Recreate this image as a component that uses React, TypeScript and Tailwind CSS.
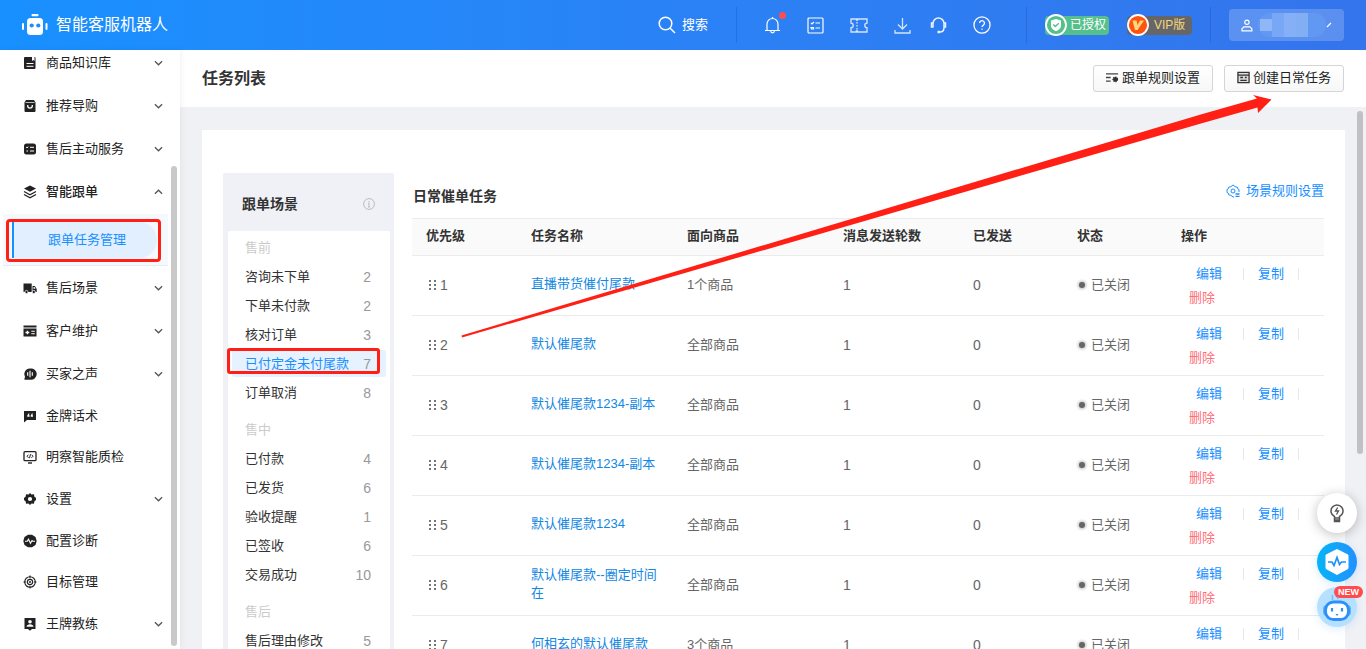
import { ReactNode, useState } from "react";

type NavItem = {
  label: string;
  icon: ReactNode;
  expandable?: boolean;
  child?: string;
};

type SceneGroup = {
  title: string;
  items: { name: string; count: number }[];
};

type Task = {
  id: number;
  name: string;
  goods: string;
  rounds: number;
  sent: number;
};

function Glyph({ children, className }: { children: ReactNode; className?: string }) {
  return (
    <svg viewBox="0 0 14 14" className={className ?? "size-[14px] shrink-0"} fill="currentColor" aria-hidden="true">
      {children}
    </svg>
  );
}

const navItems: NavItem[] = [
  {
    label: "商品知识库",
    expandable: true,
    icon: (
      <Glyph>
        <path d="M2 1h7v4l1.300-1 1.200 1V1a1 1 0 0 1 1 1v10a1 1 0 0 1-1 1H2a1 1 0 0 1-1-1V2a1 1 0 0 1 1-1z" />
        <path d="M3.500 7.500h7M3.500 10.300h7" stroke="#fff" strokeWidth="1" />
      </Glyph>
    ),
  },
  {
    label: "推荐导购",
    expandable: true,
    icon: (
      <Glyph>
        <path d="M3 1h8l1.500 2.500V12a1 1 0 0 1-1 1h-9a1 1 0 0 1-1-1V3.500z" />
        <path d="M2.500 3.500h9" stroke="#fff" strokeWidth=".7" />
        <path d="M4.700 6v.8a2.300 2.300 0 0 0 4.600 0V6" stroke="#fff" strokeWidth="1.300" fill="none" />
      </Glyph>
    ),
  },
  {
    label: "售后主动服务",
    expandable: true,
    icon: (
      <Glyph>
        <rect x="1" y="1.500" width="12" height="11" rx="2.500" />
        <path d="M3.200 5.200l.8.8 1.200-1.400M7 5.300h4M3.500 9h1.500M7 9h4" stroke="#fff" strokeWidth="1" fill="none" />
      </Glyph>
    ),
  },
  {
    label: "智能跟单",
    expandable: true,
    child: "跟单任务管理",
    icon: (
      <Glyph>
        <path d="M7 .5l6 3-6 3.200-6-3.200z" />
        <path d="M1 6.500l6 3.200 6-3.200M1 9.500l6 3.200 6-3.200" stroke="currentColor" strokeWidth="1.300" fill="none" />
      </Glyph>
    ),
  },
  {
    label: "售后场景",
    expandable: true,
    icon: (
      <Glyph>
        <path d="M.5 2.500h8.200V11H.5zM9.500 5h2.300L13.700 8v3H9.500z" />
        <circle cx="3.500" cy="11" r="1.600" stroke="#fff" strokeWidth=".7" />
        <circle cx="10.800" cy="11" r="1.600" stroke="#fff" strokeWidth=".7" />
        <path d="M10.500 6h1l1 1.700h-2z" fill="#fff" />
      </Glyph>
    ),
  },
  {
    label: "客户维护",
    expandable: true,
    icon: (
      <Glyph>
        <path d="M.5 1.500h13v2H.5zM.5 4.500h13v8H.5z" />
        <path d="M8.300 7.200h3.500M8.300 9.800h3.500" stroke="#fff" strokeWidth="1.100" />
        <path d="M2.500 8.500h3.800M4.400 6.700v3.600" stroke="#fff" strokeWidth="1.400" />
      </Glyph>
    ),
  },
  {
    label: "买家之声",
    expandable: true,
    icon: (
      <Glyph>
        <path d="M7 1.500a5.700 5.700 0 1 1 0 11.200H1.500V11l.6-.7A5.700 5.700 0 0 1 7 1.500z" />
        <path d="M4.700 5.300v3.400M7 3.800v6.400M9.300 5.300v3.400" stroke="#fff" strokeWidth="1.100" />
      </Glyph>
    ),
  },
  {
    label: "金牌话术",
    icon: (
      <Glyph>
        <path d="M1 2h12v9H4l-3 2.500z" />
        <path d="M4.300 7.800V6.500l1.200-2h1l-.6 1.800h.7v1.500zM7.700 7.800V6.500l1.200-2h1l-.6 1.800h.7v1.500z" fill="#fff" />
      </Glyph>
    ),
  },
  {
    label: "明察智能质检",
    icon: (
      <Glyph>
        <rect x="1" y="1.700" width="12" height="9" rx="1" fill="none" stroke="currentColor" strokeWidth="1.300" />
        <path d="M5 13h4" stroke="currentColor" strokeWidth="1.400" />
        <path d="M5.500 4.700L4 6.200 5.500 7.800M8.500 4.700L10 6.200 8.500 7.800M7.500 4.200L6.500 8.200" stroke="currentColor" strokeWidth="1" fill="none" />
      </Glyph>
    ),
  },
  {
    label: "设置",
    expandable: true,
    icon: (
      <Glyph>
        <path
          fillRule="evenodd"
          d="M7 1l1.500 1.400 2.500-.2.300 2.300L13 6v2l-1.700 1.500-.3 2.300-2.500-.2L7 13l-1.500-1.400-2.500.2-.3-2.300L1 8V6l1.700-1.500L3 2.200l2.500.2zM7 4.900a2.100 2.100 0 1 0 0 4.200 2.100 2.100 0 0 0 0-4.200z"
        />
      </Glyph>
    ),
  },
  {
    label: "配置诊断",
    icon: (
      <Glyph>
        <path d="M5 .8h4l3.500 2.200L13.700 7l-1.200 4L9 13.200H5L1.500 11 .3 7 1.500 3z" />
        <path d="M2 7.200h2.300l1.200-2 2 4 1.500-2.700.8.700H12" stroke="#fff" strokeWidth="1.100" fill="none" />
      </Glyph>
    ),
  },
  {
    label: "目标管理",
    icon: (
      <Glyph>
        <g fill="none" stroke="currentColor" strokeWidth="1.100">
          <circle cx="7" cy="7" r="5.300" />
          <circle cx="7" cy="7" r="2.600" />
          <path d="M7 .5v2.700M7 10.800v2.700M.5 7h2.700M10.800 7h2.700" />
        </g>
        <circle cx="7" cy="7" r="1" />
      </Glyph>
    ),
  },
  {
    label: "王牌教练",
    expandable: true,
    icon: (
      <Glyph>
        <path d="M1.500 1h11v11H9l-2 1.700L5 12H1.500z" />
        <circle cx="7" cy="4.800" r="1.800" fill="#fff" />
        <path d="M3.500 9.700c0-3.400 7-3.400 7 0z" fill="#fff" />
      </Glyph>
    ),
  },
];

const sceneGroups: SceneGroup[] = [
  {
    title: "售前",
    items: [
      { name: "咨询未下单", count: 2 },
      { name: "下单未付款", count: 2 },
      { name: "核对订单", count: 3 },
      { name: "已付定金未付尾款", count: 7 },
      { name: "订单取消", count: 8 },
    ],
  },
  {
    title: "售中",
    items: [
      { name: "已付款", count: 4 },
      { name: "已发货", count: 6 },
      { name: "验收提醒", count: 1 },
      { name: "已签收", count: 6 },
      { name: "交易成功", count: 10 },
    ],
  },
  {
    title: "售后",
    items: [{ name: "售后理由修改", count: 5 }],
  },
];

const tasks: Task[] = [
  { id: 1, name: "直播带货催付尾款", goods: "1个商品", rounds: 1, sent: 0 },
  { id: 2, name: "默认催尾款", goods: "全部商品", rounds: 1, sent: 0 },
  { id: 3, name: "默认催尾款1234-副本", goods: "全部商品", rounds: 1, sent: 0 },
  { id: 4, name: "默认催尾款1234-副本", goods: "全部商品", rounds: 1, sent: 0 },
  { id: 5, name: "默认催尾款1234", goods: "全部商品", rounds: 1, sent: 0 },
  { id: 6, name: "默认催尾款--圈定时间在", goods: "全部商品", rounds: 1, sent: 0 },
  { id: 7, name: "何相玄的默认催尾款", goods: "3个商品", rounds: 1, sent: 0 },
];

const columns = [
  { title: "优先级", width: "w-[105px]" },
  { title: "任务名称", width: "w-[156px]" },
  { title: "面向商品", width: "w-[156px]" },
  { title: "消息发送轮数", width: "w-[130px]" },
  { title: "已发送", width: "w-[104px]" },
  { title: "状态", width: "w-[104px]" },
  { title: "操作", width: "w-[157px]" },
];

function Header() {
  return (
    <header className="flex h-[50px] shrink-0 items-center bg-linear-to-r from-[#1890ff] to-[#3474ec] pr-[22px] pl-[22px] text-white">
      <svg viewBox="0 0 26 22" className="h-[22px] w-[26px]" fill="#fff" aria-hidden="true">
        <rect x="9.500" y="0" width="7" height="2.200" rx="1" />
        <rect x="5" y="4" width="16" height="17" rx="3.500" />
        <rect x="0" y="9" width="2" height="7" rx="1" />
        <rect x="23.500" y="9" width="2" height="7" rx="1" />
        <circle cx="9.700" cy="11.500" r="2.100" fill="#1b8dff" />
        <circle cx="16.300" cy="11.500" r="2.100" fill="#1b8dff" />
      </svg>
      <span className="ml-2 text-base leading-6">智能客服机器人</span>

      <div className="ml-auto flex items-center">
        <button type="button" className="flex items-center gap-[6px] text-[13px]">
          <svg viewBox="0 0 18 18" className="size-[18px]" fill="none" stroke="#fff" strokeWidth="1.500" aria-hidden="true">
            <circle cx="7.500" cy="7.500" r="6.300" />
            <path d="M12 12l5 5" />
          </svg>
          搜索
        </button>
        <span className="mr-[27px] ml-7 h-9 w-px bg-[#2372e2]" />
        <div className="flex items-center gap-[26px]">
          <button type="button" aria-label="通知" className="relative">
            <svg viewBox="0 0 17 18" className="h-[18px] w-[17px]" fill="none" stroke="#fff" strokeWidth="1.200">
              <path d="M1 14.500h15M3 14.500V8a5.500 5.500 0 0 1 11 0v6.500M8.500 1v1.500M6.700 15a1.800 1.800 0 0 0 3.600 0" />
            </svg>
            <span className="absolute -top-1 -right-[5px] size-[7px] rounded-full bg-[#ff4d4f]" />
          </button>
          <button type="button" aria-label="任务">
            <svg viewBox="0 0 17 17" className="size-[17px]" fill="none" stroke="#fff" strokeWidth="1.200">
              <rect x="1" y="1" width="15" height="15" rx="1" />
              <path d="M4 6l1 1 2-2M4 10.500h2.500v1.500H4.500zM8.500 6H13M8.500 11H13" />
            </svg>
          </button>
          <button type="button" aria-label="卡券" className="opacity-80">
            <svg viewBox="0 0 18 15" className="h-[15px] w-[18px]" fill="none" stroke="#fff" strokeWidth="1.300">
              <path d="M1 1h5.500v1h1V1H17v4.200a2.200 2.200 0 0 0 0 4.400V14H7.500v-1h-1v1H1V9.600a2.200 2.200 0 0 0 0-4.400z" />
              <path d="M7 4v1.500M7 7v1.500M7 10v1.500" />
            </svg>
          </button>
          <button type="button" aria-label="下载" className="opacity-80">
            <svg viewBox="0 0 17 17" className="size-[17px]" fill="none" stroke="#fff" strokeWidth="1.300">
              <path d="M8.500 1v11M4 7.500l4.500 4.500L13 7.500M1 13v3h15v-3" />
            </svg>
          </button>
          <button type="button" aria-label="客服" className="-ml-[7px] opacity-90">
            <svg viewBox="0 0 17 17" className="size-[17px]" fill="none" stroke="#fff" strokeWidth="1.500">
              <path d="M3 10.500V6.500a5.500 5.500 0 0 1 11 0v4c0 2.500-1.500 4.500-4 4.500" />
              <path d="M3 6H1.500v4H3M14 6h1.500v4H14" />
              <path d="M7.500 15h2.500" strokeWidth="2.500" />
            </svg>
          </button>
          <button type="button" aria-label="帮助">
            <svg viewBox="0 0 17 17" className="size-[18px]" fill="none" stroke="#fff" strokeWidth="1.200">
              <circle cx="8.500" cy="8.500" r="7.600" />
              <path d="M6.200 6.700a2.300 2.300 0 1 1 3.600 1.900c-.8.500-1.300.9-1.300 1.900M8.500 11.700v1.400" />
            </svg>
          </button>
        </div>
        <span className="mr-[18px] ml-[35px] h-9 w-px bg-[#2c68d8]" />
        <span className="flex h-[19px] w-16 items-center rounded-[4px] bg-[#56c08d] text-[12px] leading-none">
          <svg viewBox="0 0 22 22" className="mr-[3px] size-[22px] shrink-0" aria-hidden="true">
            <circle cx="11" cy="11" r="10" fill="#56c08d" stroke="#fff" strokeWidth="1.800" />
            <path d="M11 5l5 1.500v5c0 3-2.500 4.700-5 5.700-2.500-1-5-2.700-5-5.700v-5z" fill="#fff" />
            <path d="M8.300 10.500l2 2 3.500-3.300" fill="none" stroke="#56c08d" strokeWidth="1.500" />
          </svg>
          <span className="whitespace-nowrap">已授权</span>
        </span>
        <span className="ml-[18px] flex h-[19px] w-[65px] items-center rounded-[4px] bg-[#666] text-[12px] leading-none text-[#f5d77f]">
          <svg viewBox="0 0 22 22" className="mr-[5px] size-[22px] shrink-0" aria-hidden="true">
            <circle cx="11" cy="11" r="10" fill="#ff5310" stroke="#fff" strokeWidth="1.800" />
            <path d="M5.500 6.500h4l1 4.500L13 6.500h4L10.500 16H8z" fill="#ffd77a" />
          </svg>
          <span className="whitespace-nowrap">VIP版</span>
        </span>
        <span className="mr-[18px] ml-[18px] h-9 w-px bg-[#2c68d8]" />
        <button type="button" aria-label="账号" className="flex h-8 w-[115px] items-center rounded-[4px] bg-white/20 px-3">
          <svg viewBox="0 0 12 13" className="h-[13px] w-3" fill="none" stroke="#fff" strokeWidth="1.200">
            <circle cx="6" cy="3.200" r="2.200" />
            <path d="M1 12V9.800l2-2h6l2 2V12z" />
          </svg>
          <span className="ml-[5px] flex h-6 w-[69px] items-center overflow-hidden rounded-full bg-[#6199f2]">
            <span className="ml-[2px] h-3 w-3 bg-[#8fb6f7]" />
            <span className="h-6 w-3 bg-[#78a8f5]" />
            <span className="h-6 w-3 bg-[#85aff6]" />
            <span className="h-6 w-3 bg-[#82aef4]" />
          </span>
          <svg viewBox="0 0 6 6" className="size-[6px]" stroke="#fff" strokeWidth="1.200">
            <path d="M1 5l4-4" />
          </svg>
        </button>
      </div>
    </header>
  );
}

function Chevron({ up }: { up?: boolean }) {
  return (
    <svg viewBox="0 0 10 6" className="ml-auto h-[6px] w-[9px]" fill="none" stroke="#555" strokeWidth="1.400" aria-hidden="true">
      <path d={up ? "M1 5l4-4 4 4" : "M1 1l4 4 4-4"} />
    </svg>
  );
}

function Sidebar() {
  return (
    <aside className="relative z-10 w-[180px] shrink-0 overflow-hidden bg-white shadow-[1px_0_6px_rgba(0,21,41,0.06)]">
      <nav>
        {/* list is scrolled a little, so the first row sits partly under the header */}
        <ul className="-mt-[9px]">
          {navItems.map((item) => (
            <li key={item.label}>
              <button
                type="button"
                className={`flex w-full items-center pr-[17px] pl-[23px] text-[13px] text-[#222] ${item.expandable ? "h-[43px]" : "h-[41px]"} ${item.child ? "font-medium" : ""}`}
              >
                {item.icon}
                <span className="ml-[9px]">{item.label}</span>
                {item.expandable && <Chevron up={!!item.child} />}
              </button>
              {item.child && (
                <div className="mt-px mr-3 ml-[3px] h-[52px] border-b border-[#e6edf4] bg-[#f5f9fe] px-[9px] pt-2">
                  <div className="relative mr-[2px]">
                    <a href="#tasks" className="flex h-9 items-center rounded-r-full border-l-2 border-[#1890ff] bg-[#e1efff] pl-[34px] text-[13px] text-[#1890ff]">
                      {item.child}
                    </a>
                    <span className="pointer-events-none absolute -top-[3px] -right-1 -bottom-1 -left-[6px] rounded-[4px] border-3 border-[#ff1f14]" />
                  </div>
                </div>
              )}
            </li>
          ))}
        </ul>
      </nav>
      <span className="absolute top-[116px] right-[3px] bottom-[3px] w-[6px] rounded-full bg-[#c9c9c9]" />
    </aside>
  );
}

function ScenePanel() {
  const [active, setActive] = useState("已付定金未付尾款");

  return (
    <section className="w-[171px] shrink-0 rounded-t-[2px] bg-[#f0f1f6] px-1 pl-[5px]">
      <div className="flex h-[58px] items-center justify-between pt-1 pr-[15px] pl-[14px]">
        <h2 className="text-sm font-bold text-[#333]">跟单场景</h2>
        <svg viewBox="0 0 12 12" className="size-3" fill="none" stroke="#bbb" strokeWidth="1" aria-hidden="true">
          <circle cx="6" cy="6" r="5.400" />
          <path d="M6 3v1.200M6 5.200V9M5 9h2M5 5.300h1" />
        </svg>
      </div>
      <div className="rounded-[2px] bg-white px-1 pt-[3px] pb-6">
        {sceneGroups.map((group) => (
          <div key={group.title} className="mb-[9px]">
            <h3 className="flex h-7 items-center pl-[13px] text-[13px] text-[#ccc]">{group.title}</h3>
            <ul>
              {group.items.map((item) => (
                <li key={item.name} className="relative py-px">
                  <button
                    type="button"
                    onClick={() => setActive(item.name)}
                    className={`flex h-[27px] w-full items-center justify-between rounded-[2px] pr-[15px] pl-[13px] text-[13px] whitespace-nowrap ${active === item.name ? "bg-[#e6f2ff] text-[#1890ff]" : "text-[#333]"}`}
                  >
                    {item.name}
                    <span className="text-sm text-[#999]">{item.count}</span>
                  </button>
                  {item.name === "已付定金未付尾款" && (
                    <span className="pointer-events-none absolute -top-px right-[6px] bottom-1 -left-[5px] rounded-[3px] border-3 border-[#ff1f14]" />
                  )}
                </li>
              ))}
            </ul>
          </div>
        ))}
      </div>
    </section>
  );
}

function TaskRow({ task }: { task: Task }) {
  return (
    <tr className="h-[60px] border-b border-[#ebebeb] text-[13px] text-[#666]">
      <td className="pb-[2px] pl-[17px]">
        <span className="flex items-center gap-1 text-sm">
          <svg viewBox="0 0 7 10" className="h-[10px] w-[7px]" fill="#777" aria-hidden="true">
            <path d="M0 0h2v2H0zM5 0h2v2H5zM0 4h2v2H0zM5 4h2v2H5zM0 8h2v2H0zM5 8h2v2H5z" />
          </svg>
          {task.id}
        </span>
      </td>
      <td className="px-[14px] pb-1 leading-[18px] break-all">
        <a href="#task" className="text-[#1288e4]">{task.name}</a>
      </td>
      <td className="px-[14px] pb-[2px]">{task.goods}</td>
      <td className="px-[14px] pb-[2px] text-sm">{task.rounds}</td>
      <td className="px-[14px] pb-[2px] text-sm">{task.sent}</td>
      <td className="pb-[2px] pl-4">
        <span className="flex items-center gap-[6px]">
          <span className="size-[6px] rounded-full bg-[#666] shadow-[0_0_3px_1px_#bbb]" />
          已关闭
        </span>
      </td>
      <td className="pl-[22px] leading-6">
        <div className="flex items-center">
          <button type="button" className="px-[7px] text-[#1890ff]">编辑</button>
          <span className="ml-[14px] h-3 w-px bg-[#e8e8e8]" />
          <button type="button" className="ml-[14px] text-[#1890ff]">复制</button>
          <span className="ml-[14px] h-3 w-px bg-[#e8e8e8]" />
        </div>
        <button type="button" className="block text-[#ff7078]">删除</button>
      </td>
    </tr>
  );
}

function TaskTable() {
  return (
    <section className="min-w-0 flex-1">
      <div className="flex h-[45px] items-center justify-between">
        <h2 className="pl-px text-sm font-bold text-[#333]">日常催单任务</h2>
        <a href="#rules" className="mb-[10px] flex items-center gap-[6px] text-[13px] text-[#1890ff]">
          <svg viewBox="0 0 14 14" className="size-[14px]" fill="none" stroke="currentColor" strokeWidth="1" aria-hidden="true">
            <path d="M13 8V5.500l-1.300-.7-.5-1.700-2-.4L7 1 4.800 2.700l-2 .4-.5 1.700L1 5.500v3l1.300.7.5 1.700 2 .4L7 13h1" />
            <circle cx="7" cy="7" r="2" />
            <path d="M9.500 10H13.500M9.500 12.300H13.500" strokeWidth="1.300" />
          </svg>
          场景规则设置
        </a>
      </div>
      <table className="w-full table-fixed border-collapse">
        <thead>
          <tr className="h-[37px] border-y border-[#ebebeb] bg-[#fafafa] text-left text-[13px] text-[#333]">
            {columns.map((col) => (
              <th key={col.title} className={`${col.width} px-[14px] pb-[3px] font-bold whitespace-nowrap`}>{col.title}</th>
            ))}
          </tr>
        </thead>
        <tbody>
          {tasks.map((task) => (
            <TaskRow key={task.id} task={task} />
          ))}
        </tbody>
      </table>
    </section>
  );
}

function FloatingTools() {
  return (
    <div className="absolute right-[9px] bottom-[22px] z-20 flex flex-col items-center">
      <button type="button" aria-label="建议" className="flex size-10 items-center justify-center rounded-full bg-white shadow-[0_2px_12px_rgba(0,0,0,0.25)]">
        <svg viewBox="0 0 14 19" className="h-[19px] w-[14px]" fill="none" stroke="#555" strokeWidth="1.500">
          <path d="M4.500 14v-1.500a6 6 0 1 1 5 0V14zM4.500 14v3.500h5V14M4.500 16h5" />
          <path d="M7.700 3.500L5.500 7h3l-2 3.500" strokeWidth="1.300" />
        </svg>
      </button>
      <button type="button" aria-label="诊断" className="mt-[9px] flex size-10 items-center justify-center rounded-full bg-linear-to-r from-[#05b4f5] to-[#2090ff] shadow-[0_2px_8px_rgba(24,144,255,0.2)]">
        <svg viewBox="0 0 24 26" className="h-[26px] w-6" fill="#fff">
          <path d="M12 .5L23 6v13.500L12 25.500 1 19.500V6z" stroke="#fff" strokeLinejoin="round" />
          <path d="M3 13h4l2 3.500 3-8 2.500 7L16.500 13H21" fill="none" stroke="#1d93f5" strokeWidth="1.700" />
        </svg>
      </button>
      <button type="button" aria-label="助手" className="relative mt-[5px] flex size-10 items-center justify-center rounded-full bg-[#b5e1ff] shadow-[0_2px_8px_rgba(24,144,255,0.15)]">
        <svg viewBox="0 0 28 28" className="size-7">
          <path d="M9.500 2v5M13 1l2 5" stroke="#74bdf7" strokeWidth="1.500" />
          <rect x="0" y="12" width="28" height="11" rx="4" fill="#5fb2fb" />
          <rect x="2.500" y="9" width="23" height="17.500" rx="8" fill="#fff" stroke="#2b90fb" strokeWidth="2.800" />
          <path d="M9 15v3.500M19 15v3.500" stroke="#2b90fb" strokeWidth="2.200" />
          <path d="M12.500 21h3L14 23z" fill="#2b90fb" />
        </svg>
        <span className="absolute -top-px -right-[6px] rounded-full bg-[#ff4d4f] px-1 text-[9px] leading-3 font-bold text-white">NEW</span>
      </button>
    </div>
  );
}

export default function App() {
  return (
    <div className="relative flex h-screen flex-col overflow-hidden bg-[#f0f1f5] font-['Liberation_Sans','Noto_Sans_CJK_SC',sans-serif]">
      <Header />
      <div className="flex min-h-0 flex-1">
        <Sidebar />
        <main className="flex min-w-0 flex-1 flex-col">
          <div className="flex h-[57px] shrink-0 items-center bg-white pr-[22px] pl-[22px]">
            <h1 className="text-base font-bold text-[#333]">任务列表</h1>
            <div className="ml-auto flex gap-[11px]">
              <button type="button" className="flex h-[27px] items-center gap-[3px] rounded-[3px] border border-[#d5d5d5] bg-linear-to-b from-white to-[#f7f7f7] px-3 pb-[2px] text-[13px] text-[#222]">
                <Glyph className="size-[13px]">
                  <path d="M0 3h13M0 7h5M0 11h5" stroke="#444" strokeWidth="1.400" />
                  <circle cx="10" cy="9" r="2.500" fill="#333" stroke="#333" strokeWidth="1.200" strokeDasharray="1.300 .8" />
                </Glyph>
                跟单规则设置
              </button>
              <button type="button" className="flex h-[27px] items-center gap-[3px] rounded-[3px] border border-[#d5d5d5] bg-linear-to-b from-white to-[#f7f7f7] px-3 pb-[2px] text-[13px] text-[#222]">
                <Glyph className="size-[13px]">
                  <path d="M1 1.500h12v11H1z" fill="#ddd" stroke="#333" strokeWidth="1.400" />
                  <path d="M1 4.500h12M3.500 7h3M3.500 10h7M8.500 7h2" stroke="#333" strokeWidth="1.400" />
                </Glyph>
                创建日常任务
              </button>
            </div>
          </div>
          <div className="relative min-h-0 flex-1 overflow-hidden pt-[23px] pr-[21px] pl-[22px]">
            <div className="flex gap-[18px] bg-white px-[21px] pt-[43px]">
              <ScenePanel />
              <TaskTable />
            </div>
            <span className="absolute top-1 right-[3px] h-[343px] w-[6px] rounded-full bg-[#c1c1c3]" />
          </div>
        </main>
      </div>
      <FloatingTools />
      {/* pointer from the second task to the create button */}
      <svg viewBox="0 0 812 246" className="pointer-events-none absolute top-[94px] right-[93px] z-30 h-[246px] w-[812px]" fill="#ff1f14" aria-hidden="true">
        <path d="M0.500 241.500L738 21 796 4.500 792 1 810.500 5.500 797 19 796.500 13.500 740 29.500 1 243.500z" />
      </svg>
    </div>
  );
}
